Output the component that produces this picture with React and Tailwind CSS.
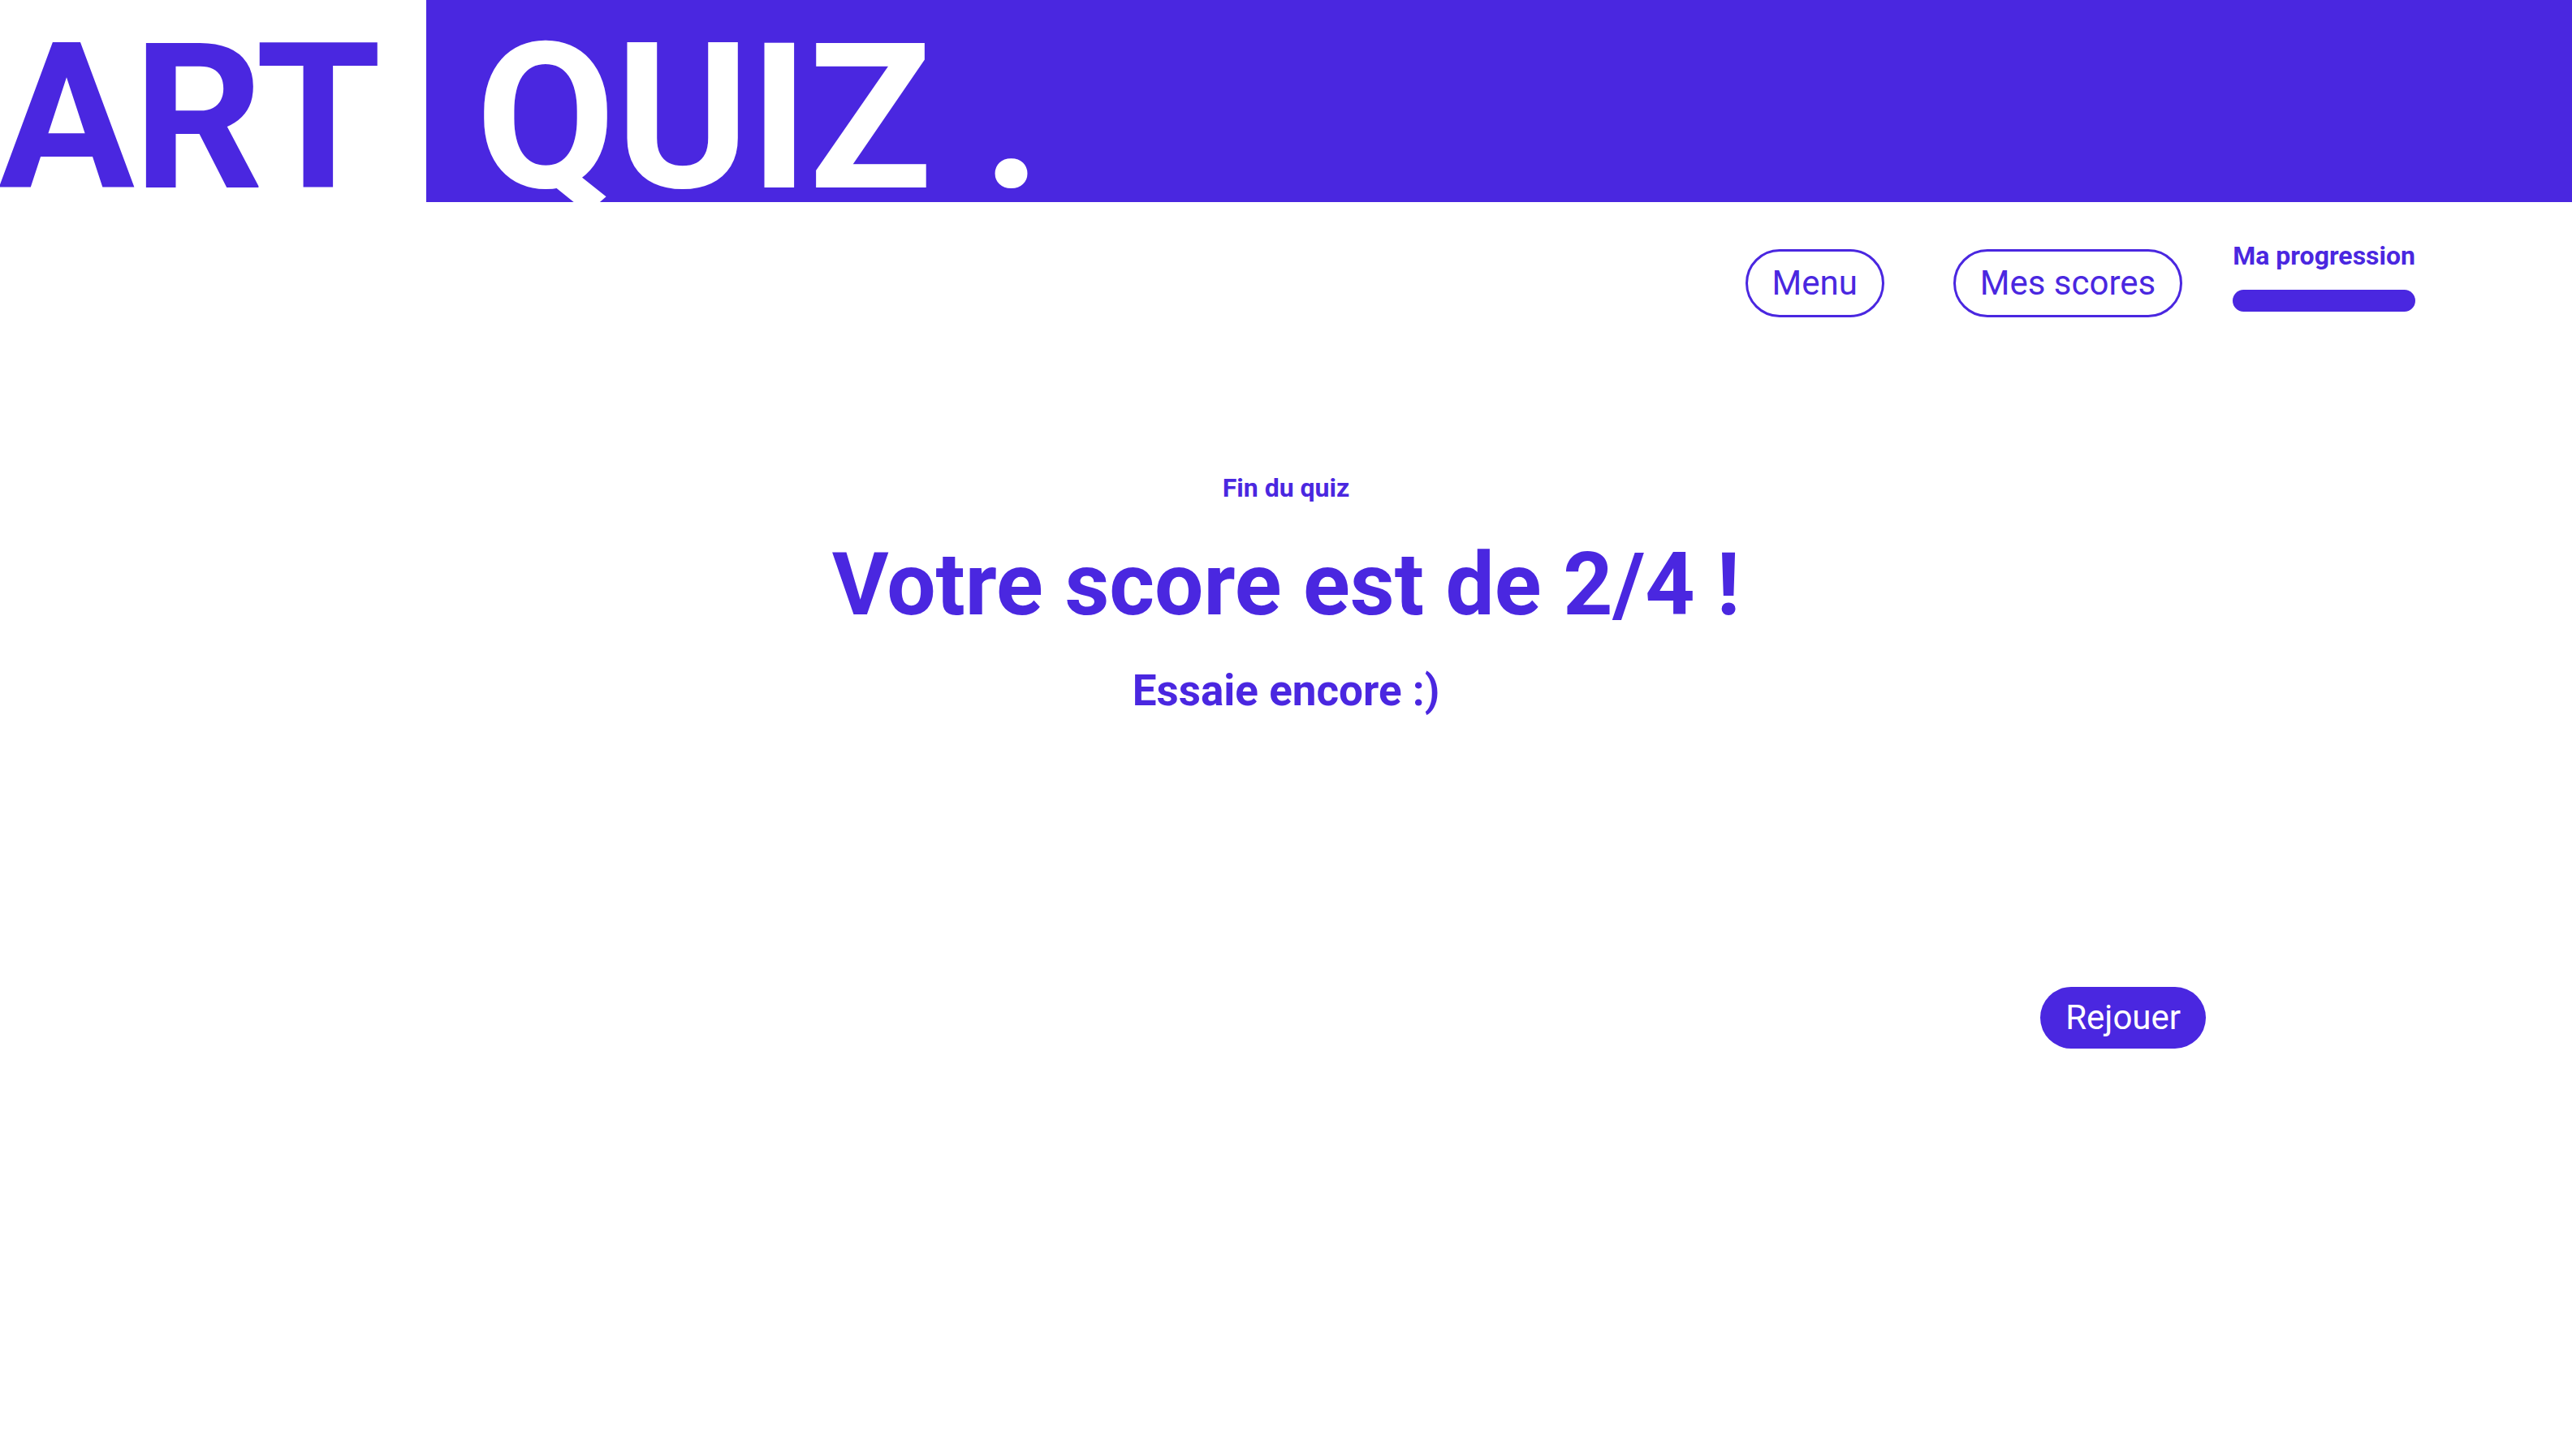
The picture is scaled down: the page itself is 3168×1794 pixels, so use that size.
export default function App() {
  return (
    <div className="min-h-screen bg-white text-[#4a27e0]" style={{ fontFamily: "Roboto, 'Noto Sans', sans-serif" }}>
      {/* Header */}
      <header className="flex h-[249px]">
        <div className="w-[527px] shrink-0 -ml-[2px] pt-[21px] text-[250px] font-bold leading-none tracking-[-2px] whitespace-nowrap">
          ART
        </div>
        <div className="flex-1 bg-[#4a27e0] pt-[21px] pl-[61px] text-[250px] font-bold leading-none text-white whitespace-nowrap">
          QUIZ .
        </div>
      </header>

      {/* Nav */}
      <nav className="flex justify-end items-start pr-[193px] mt-[50px]">
        <button className="h-[84px] mt-[8px] px-[30px] border-[3px] border-[#4a27e0] rounded-full text-[42px] leading-none">
          Menu
        </button>
        <button className="h-[84px] mt-[8px] ml-[85px] px-[30px] border-[3px] border-[#4a27e0] rounded-full text-[42px] leading-none">
          Mes scores
        </button>
        <div className="ml-[62px] flex flex-col">
          <span className="text-[32px] font-bold leading-none">Ma progression</span>
          <div className="mt-[26px] h-[27px] w-full rounded-full bg-[#4a27e0]"></div>
        </div>
      </nav>

      {/* Résultat */}
      <main className="flex flex-col items-center mt-[194px]">
        <p className="text-[32px] font-bold leading-none">Fin du quiz</p>
        <h1 className="mt-[50px] text-[107px] font-bold leading-none">Votre score est de 2/4 !</h1>
        <p className="mt-[51px] text-[53px] font-bold leading-none">Essaie encore :)</p>
      </main>

      <div className="flex justify-end pr-[451px] mt-[338px]">
        <button className="h-[76px] px-[31px] rounded-full bg-[#4a27e0] text-white text-[42px] leading-none">
          Rejouer
        </button>
      </div>
    </div>
  );
}
